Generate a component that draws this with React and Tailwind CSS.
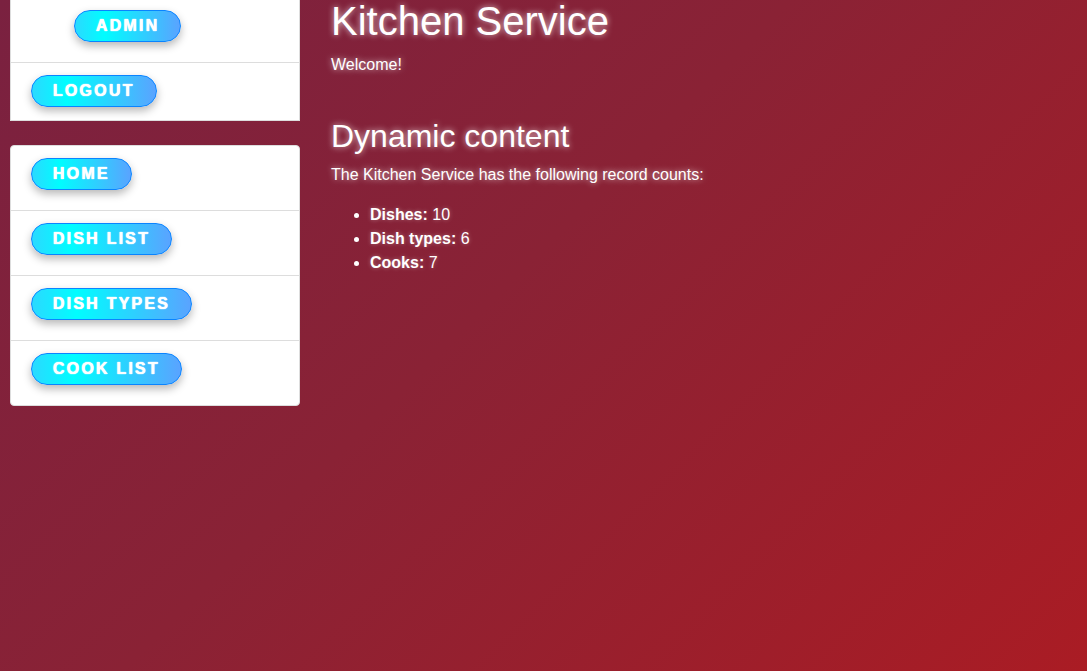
const pill =
  "inline-flex h-[32px] items-center rounded-full border-[1.5px] border-[#0a84ff] bg-[linear-gradient(to_right,#2bd9ff,#00fdff_28%,#5aa3ff)] px-[21px] font-bold uppercase tracking-[2.2px] text-[16px] leading-none text-white shadow-[0_4px_8px_rgba(0,0,0,0.28)] [text-shadow:0_0_1px_#ffffff,0_0_1px_#ffffff]";

function NavButton({ children }) {
  return <a className={pill}>{children}</a>;
}

export default function App() {
  const navItems = ["Home", "Dish list", "Dish types", "Cook list"];
  const counts = [
    ["Dishes:", 10],
    ["Dish types:", 6],
    ["Cooks:", 7],
  ];

  return (
    <div className="min-h-[671px] w-full bg-[linear-gradient(135deg,#7a2140_0%,#8a2235_45%,#aa1c24_100%)] font-['Liberation_Sans',Arial,sans-serif] text-white">
      <div className="flex gap-[31px] pl-[10px]">
        <aside className="w-[290px] shrink-0">
          <div className="border border-t-0 border-[#dddddd] bg-white">
            <div className="pl-[63px] pt-[10px] pb-[20px]">
              <NavButton>Admin</NavButton>
            </div>
            <div className="border-t border-[#dddddd] pl-[20px] pt-[12px] pb-[13px]">
              <NavButton>Logout</NavButton>
            </div>
          </div>

          <ul className="mt-[24px] rounded-[4px] border border-[#dddddd] bg-white">
            {navItems.map((item, i) => (
              <li
                key={item}
                className={`pl-[20px] pt-[12px] pb-[20px] ${i > 0 ? "border-t border-[#dddddd]" : ""}`}
              >
                <NavButton>{item}</NavButton>
              </li>
            ))}
          </ul>
        </aside>

        <main className="pt-[1px] [text-shadow:0_0_6px_rgba(255,255,255,0.75)]">
          <h1 className="text-[40px] leading-[40px]">Kitchen Service</h1>
          <p className="mt-[15px] text-[16px] leading-[18px]">Welcome!</p>

          <h2 className="mt-[44px] text-[32px] leading-[37px]">Dynamic content</h2>
          <p className="mt-[11px] text-[16px] leading-[18px]">
            The Kitchen Service has the following record counts:
          </p>
          <ul className="mt-[19px] list-disc pl-[39px] text-[16px] leading-[24px] [text-shadow:0_0_4px_rgba(255,255,255,0.35)]">
            {counts.map(([label, n]) => (
              <li key={label}>
                <b>{label}</b> {n}
              </li>
            ))}
          </ul>
        </main>
      </div>
    </div>
  );
}
